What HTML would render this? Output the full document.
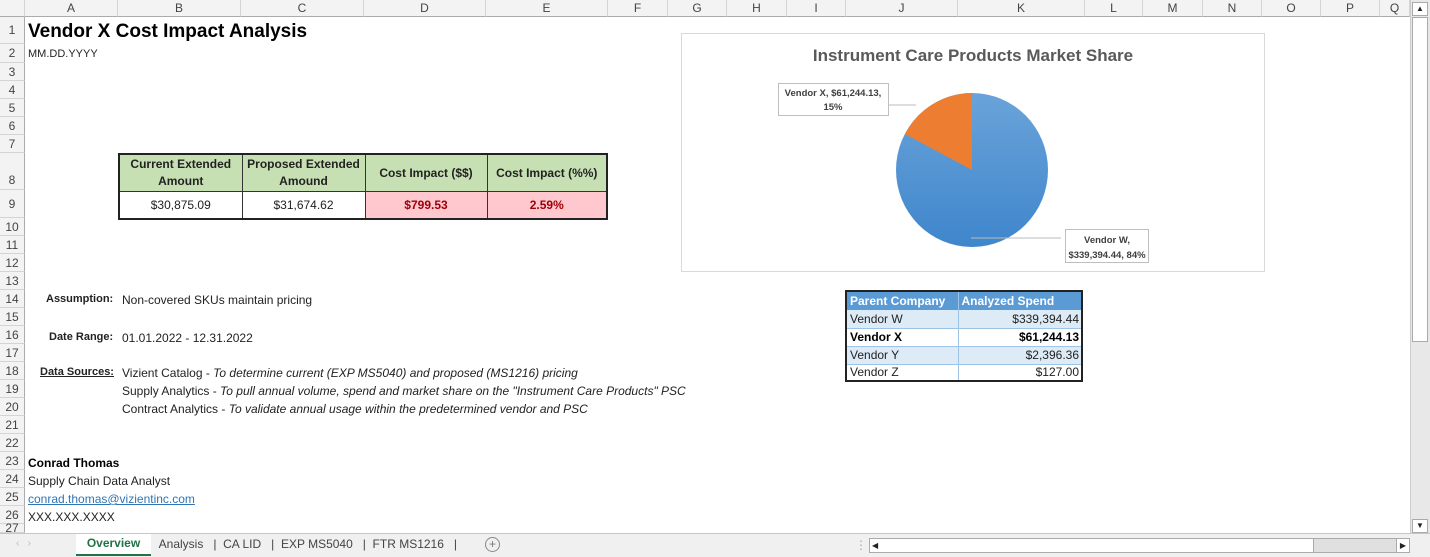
<!DOCTYPE html>
<html><head><meta charset="utf-8"><style>
*{margin:0;padding:0;box-sizing:border-box}
body{width:1430px;height:557px;overflow:hidden;background:#fff;font-family:"Liberation Sans",sans-serif;font-size:12px;color:#222;position:relative}
.a{position:absolute;white-space:nowrap}
.ch{position:absolute;top:0;height:17px;background:#f3f3f3;border-right:1px solid #d4d4d4;border-bottom:1px solid #ababab;text-align:center;font-size:12px;line-height:17px;color:#444}
.rh{position:absolute;left:0;width:25px;background:#f3f3f3;border-right:1px solid #ababab;border-bottom:1px solid #d4d4d4;text-align:center;font-size:12px;color:#444}
table{border-collapse:collapse;position:absolute}
</style></head><body>
<div id="hdr"></div>
<div id="rows"></div>
<script>
var cols=[["",0,25],["A",25,118],["B",118,241],["C",241,364],["D",364,486],["E",486,608],["F",608,668],["G",668,727],["H",727,787],["I",787,846],["J",846,958],["K",958,1085],["L",1085,1143],["M",1143,1203],["N",1203,1262],["O",1262,1321],["P",1321,1380],["Q",1380,1410]];
var h="";cols.forEach(c=>{h+='<div class="ch" style="left:'+c[1]+'px;width:'+(c[2]-c[1])+'px">'+c[0]+'</div>'});
document.getElementById("hdr").innerHTML=h;
var rb=[17,44,63,81,99,117,135,153,190,218,236];for(var i=11;i<=27;i++)rb.push(rb[rb.length-1]+18);
var r="";for(var i=0;i<27;i++){var t=rb[i],b=Math.min(rb[i+1],533);r+='<div class="rh" style="top:'+t+'px;height:'+(b-t)+'px;line-height:'+(b-t+ (i==7?18:0))+'px">'+(i+1)+'</div>'}
document.getElementById("rows").innerHTML=r;
</script>
<div class="a" style="left:28px;top:21px;font-size:19px;font-weight:bold;color:#000">Vendor X Cost Impact Analysis</div>
<div class="a" style="left:28px;top:48px;font-size:11px">MM.DD.YYYY</div>

<table style="left:118px;top:153px;width:490px;border:2px solid #222;font-size:12px;text-align:center">
<tr style="height:37px;background:#c6e0b4;font-weight:bold"><td style="width:123px;border:1px solid #333;line-height:17px">Current Extended<br>Amount</td><td style="width:123px;border:1px solid #333;line-height:17px">Proposed Extended<br>Amound</td><td style="width:122px;border:1px solid #333">Cost Impact ($$)</td><td style="border:1px solid #333">Cost Impact (%%)</td></tr>
<tr style="height:28px"><td style="border:1px solid #333">$30,875.09</td><td style="border:1px solid #333">$31,674.62</td><td style="border:1px solid #333;background:#ffc7ce;color:#9c0006;font-weight:bold">$799.53</td><td style="border:1px solid #333;background:#ffc7ce;color:#9c0006;font-weight:bold">2.59%</td></tr>
</table>

<div class="a" style="left:46px;top:293px;font-weight:bold;font-size:11px">Assumption:</div>
<div class="a" style="left:122px;top:293px">Non-covered SKUs maintain pricing</div>
<div class="a" style="left:49px;top:331px;font-weight:bold;font-size:11px">Date Range:</div>
<div class="a" style="left:122px;top:331px">01.01.2022 - 12.31.2022</div>
<div class="a" style="left:40px;top:366px;font-weight:bold;font-size:11px;text-decoration:underline">Data Sources:</div>
<div class="a" style="left:122px;top:366px">Vizient Catalog - <i>To determine current (EXP MS5040) and proposed (MS1216) pricing</i></div>
<div class="a" style="left:122px;top:384px">Supply Analytics - <i>To pull annual volume, spend and market share on the "Instrument Care Products" PSC</i></div>
<div class="a" style="left:122px;top:402px">Contract Analytics - <i>To validate annual usage within the predetermined vendor and PSC</i></div>
<div class="a" style="left:28px;top:456px;font-weight:bold;color:#000">Conrad Thomas</div>
<div class="a" style="left:28px;top:474px">Supply Chain Data Analyst</div>
<div class="a" style="left:28px;top:492px;color:#2e75b6;text-decoration:underline">conrad.thomas@vizientinc.com</div>
<div class="a" style="left:28px;top:510px">XXX.XXX.XXXX</div>

<svg class="a" style="left:681px;top:33px" width="584" height="239">
<rect x="0.5" y="0.5" width="583" height="238" fill="#fff" stroke="#d9d9d9"/>
<text x="292" y="28" text-anchor="middle" font-family="Liberation Sans" font-size="17" font-weight="bold" fill="#595959">Instrument Care Products Market Share</text>
<defs><linearGradient id="g" x1="0" y1="0" x2="0" y2="1"><stop offset="0" stop-color="#6aa3d9"/><stop offset="1" stop-color="#3f86cc"/></linearGradient></defs>
<ellipse cx="291" cy="137" rx="76" ry="77" fill="url(#g)"/>
<path d="M291 137 L291 60 A76 77 0 0 0 224 101 Z" fill="#ed7d31"/>
<line x1="175" y1="72" x2="235" y2="72" stroke="#bbb"/>
<line x1="290" y1="205" x2="380" y2="205" stroke="#bbb"/>
<rect x="97.5" y="50.5" width="110" height="32" fill="#fff" stroke="#bfbfbf"/>
<text x="152" y="63" text-anchor="middle" font-size="9.5" font-weight="bold" fill="#404040">Vendor X, $61,244.13,</text>
<text x="152" y="77" text-anchor="middle" font-size="9.5" font-weight="bold" fill="#404040">15%</text>
<rect x="384.5" y="196.5" width="83" height="33" fill="#fff" stroke="#bfbfbf"/>
<text x="426" y="210" text-anchor="middle" font-size="9.5" font-weight="bold" fill="#404040">Vendor W,</text>
<text x="426" y="225" text-anchor="middle" font-size="9.5" font-weight="bold" fill="#404040">$339,394.44, 84%</text>
</svg>

<table style="left:845px;top:290px;width:238px;border:2px solid #222;font-size:12px">
<tr style="height:19px;background:#5b9bd5;color:#fff;font-weight:bold"><td style="width:112px;padding-left:3px;border-right:1px solid #9dc3e6">Parent Company</td><td style="padding-left:3px">Analyzed Spend</td></tr>
<tr style="height:18px;background:#ddebf7"><td style="padding-left:3px;border-right:1px solid #9dc3e6;border-bottom:1px solid #9dc3e6">Vendor W</td><td style="text-align:right;padding-right:2px;border-bottom:1px solid #9dc3e6">$339,394.44</td></tr>
<tr style="height:18px;font-weight:bold;color:#000"><td style="padding-left:3px;border-right:1px solid #9dc3e6;border-bottom:1px solid #9dc3e6">Vendor X</td><td style="text-align:right;padding-right:2px;border-bottom:1px solid #9dc3e6">$61,244.13</td></tr>
<tr style="height:18px;background:#ddebf7"><td style="padding-left:3px;border-right:1px solid #9dc3e6;border-bottom:1px solid #9dc3e6">Vendor Y</td><td style="text-align:right;padding-right:2px;border-bottom:1px solid #9dc3e6">$2,396.36</td></tr>
<tr style="height:17px"><td style="padding-left:3px;border-right:1px solid #9dc3e6">Vendor Z</td><td style="text-align:right;padding-right:2px">$127.00</td></tr>
</table>

<!-- vertical scrollbar -->
<div class="a" style="left:1410px;top:0;width:20px;height:533px;background:#e8e8e8;border-left:1px solid #ccc"></div>
<div class="a" style="left:1412px;top:2px;width:16px;height:14px;background:#fff;border:1px solid #aaa;font-size:8px;text-align:center;line-height:12px">▲</div>
<div class="a" style="left:1412px;top:17px;width:16px;height:325px;background:#fff;border:1px solid #aaa"></div>
<div class="a" style="left:1412px;top:519px;width:16px;height:14px;background:#fff;border:1px solid #aaa;font-size:8px;text-align:center;line-height:12px">▼</div>
<!-- tab bar -->
<div class="a" style="left:0;top:533px;width:1430px;height:24px;background:#f0f0f0;border-top:1px solid #c6c6c6"></div>
<div class="a" style="left:16px;top:538px;color:#bbb;font-size:10px">‹ &nbsp; ›</div>
<div class="a" style="left:76px;top:534px;width:75px;height:22px;background:#fff;border-bottom:2px solid #217346;color:#217346;font-weight:bold;text-align:center;line-height:19px;font-size:12px">Overview</div>
<div class="a" style="left:152px;top:537px;font-size:12px;color:#444">&nbsp;&nbsp;Analysis &nbsp;&nbsp;| &nbsp;CA LID &nbsp;&nbsp;| &nbsp;EXP MS5040 &nbsp;&nbsp;| &nbsp;FTR MS1216 &nbsp;&nbsp;|</div>
<div class="a" style="left:485px;top:537px;width:15px;height:15px;border:1px solid #888;border-radius:50%;text-align:center;line-height:13px;color:#777">+</div>
<div class="a" style="left:855px;top:538px;color:#aaa">⋮</div>
<div class="a" style="left:869px;top:538px;width:541px;height:15px;background:#e0e0e0;border:1px solid #aaa"></div>
<div class="a" style="left:869px;top:538px;width:445px;height:15px;background:#fff;border:1px solid #aaa;font-size:8px;line-height:13px;padding-left:2px">◀</div>
<div class="a" style="left:1396px;top:538px;width:14px;height:15px;background:#fff;border:1px solid #aaa;font-size:8px;line-height:13px;text-align:center">▶</div>
</body></html>
